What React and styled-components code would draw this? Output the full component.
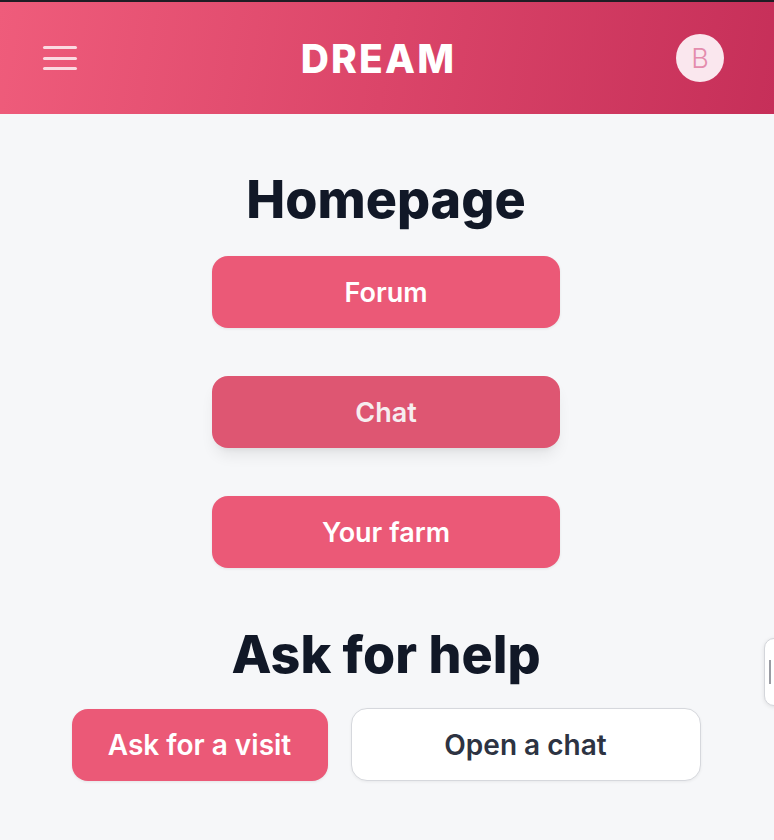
import React from 'react';
import styled, { createGlobalStyle, css } from 'styled-components';

const GlobalStyle = createGlobalStyle`
  html, body {
    margin: 0;
    padding: 0;
    background: #f6f7f9;
    font-family: Inter, "Noto Sans", sans-serif;
    -webkit-font-smoothing: antialiased;
  }
  * {
    box-sizing: border-box;
  }
`;

const Page = styled.div`
  min-height: 840px;
  border-top: 2px solid #1f1d24;
  background: #f6f7f9;
  position: relative;
  overflow: hidden;
`;

const Header = styled.header`
  height: 112px;
  padding: 0 50px 0 43px;
  display: grid;
  grid-template-columns: 1fr auto 1fr;
  align-items: center;
  background: linear-gradient(100deg, #ef5c7b 0%, #db4569 50%, #c62f59 100%);
`;

const MenuButton = styled.button`
  justify-self: start;
  width: 34px;
  height: 24px;
  padding: 0;
  border: 0;
  background: none;
  display: flex;
  flex-direction: column;
  justify-content: space-between;
  cursor: pointer;
`;

const MenuLine = styled.span`
  display: block;
  height: 3px;
  border-radius: 2px;
  background: rgba(255, 255, 255, 0.78);
`;

const Brand = styled.h1`
  margin: 0;
  font-size: 39px;
  font-weight: 800;
  letter-spacing: 2.2px;
  color: #fff;
  transform: translateX(-5px);
`;

const Avatar = styled.div`
  justify-self: end;
  width: 48px;
  height: 48px;
  border-radius: 50%;
  background: #fae7ee;
  color: #e48cad;
  font-size: 27px;
  font-weight: 300;
  display: flex;
  align-items: center;
  justify-content: center;
`;

const Main = styled.main`
  display: flex;
  flex-direction: column;
  align-items: center;
  padding-top: 62px;
  transform: translateX(-1px);
`;

const Title = styled.h2`
  margin: 0;
  font-size: 52px;
  line-height: 48px;
  font-weight: 800;
  color: #111827;
  letter-spacing: 0;
`;

const Stack = styled.nav`
  margin-top: 32px;
  display: flex;
  flex-direction: column;
  gap: 48px;
`;

const buttonBase = css`
  height: 72px;
  border-radius: 16px;
  font-family: Inter, "Noto Sans", sans-serif;
  font-weight: 600;
  display: flex;
  align-items: center;
  justify-content: center;
  cursor: pointer;
`;

const PinkButton = styled.button`
  ${buttonBase};
  width: ${props => props.$width || '348px'};
  font-size: ${props => props.$size || '27px'};
  border: 0;
  color: ${props => (props.$active ? '#f6eef0' : '#fff')};
  background: ${props => (props.$active ? '#de5672' : '#eb5977')};
  box-shadow: ${props => (props.$active
    ? '0 10px 16px -4px rgba(0,0,0,0.09), 0 4px 6px -4px rgba(0,0,0,0.08)'
    : '0 1px 3px rgba(0,0,0,0.08)')};
`;

const WhiteButton = styled.button`
  ${buttonBase};
  width: 350px;
  height: 73px;
  font-size: 28px;
  border: 1px solid #d6d8dd;
  color: #2d3342;
  background: #fff;
  box-shadow: 0 1px 3px rgba(0,0,0,0.06);
`;

const HelpTitle = styled(Title)`
  margin-top: 63px;
`;

const HelpRow = styled.div`
  margin-top: 29px;
  display: flex;
  align-items: center;
  gap: 23px;
`;

const SideTab = styled.div`
  position: absolute;
  top: 636px;
  right: -16px;
  width: 26px;
  height: 68px;
  border: 1px solid #d4d6db;
  border-radius: 10px;
  background: #fff;
  box-shadow: 0 1px 4px rgba(0,0,0,0.1);
  display: flex;
  align-items: center;
  padding-left: 4px;
`;

const TabGrip = styled.span`
  width: 2px;
  height: 24px;
  background: #9a9ca3;
`;

const App = () => (
  <>
    <GlobalStyle />
    <Page>
      <Header>
        <MenuButton aria-label="Menu">
          <MenuLine />
          <MenuLine />
          <MenuLine />
        </MenuButton>
        <Brand>DREAM</Brand>
        <Avatar>B</Avatar>
      </Header>
      <Main>
        <Title>Homepage</Title>
        <Stack>
          <PinkButton>Forum</PinkButton>
          <PinkButton $active>Chat</PinkButton>
          <PinkButton>Your farm</PinkButton>
        </Stack>
        <HelpTitle>Ask for help</HelpTitle>
        <HelpRow>
          <PinkButton $width="256px" $size="28px">Ask for a visit</PinkButton>
          <WhiteButton>Open a chat</WhiteButton>
        </HelpRow>
      </Main>
      <SideTab>
        <TabGrip />
      </SideTab>
    </Page>
  </>
);

export default App;
